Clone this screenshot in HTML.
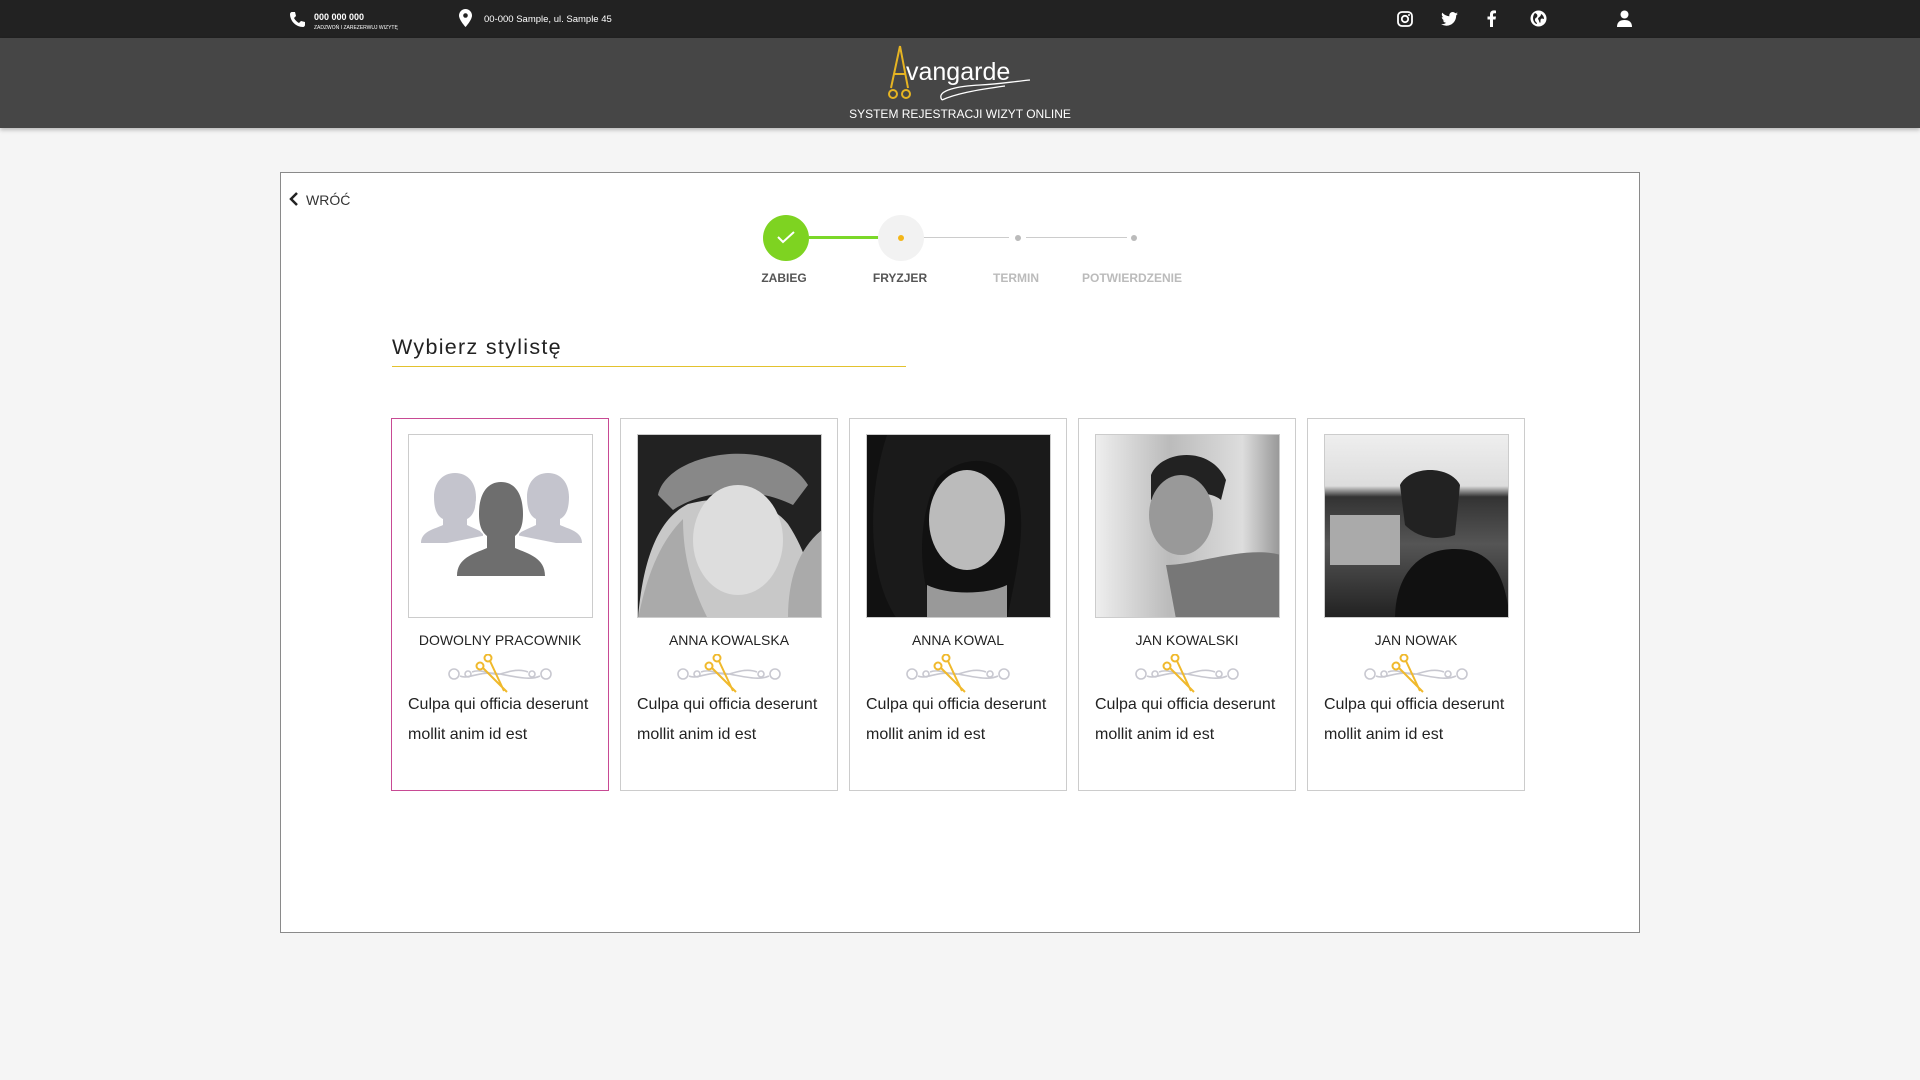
<!DOCTYPE html>
<html><head><meta charset="utf-8"><style>
*{margin:0;padding:0;box-sizing:border-box}
body{width:1920px;height:1080px;background:#f5f5f5;font-family:"Liberation Sans",Arial,sans-serif;position:relative;overflow:hidden}
.top{position:absolute;left:0;top:0;width:1920px;height:38px;background:#222;color:#fff}
.hdr{position:absolute;left:0;top:38px;width:1920px;height:90px;background:#464646;box-shadow:0 2px 4px rgba(0,0,0,.25)}
.abs{position:absolute}
.box{position:absolute;left:280px;top:172px;width:1360px;height:761px;background:#fff;border:1px solid #8a8a8a}
.lbl{position:absolute;top:271px;font-size:12px;font-weight:bold;width:140px;text-align:center;margin-left:-70px}
.card{position:absolute;top:418px;width:218px;height:373px;background:#fff;border:1px solid #ccc}
.card.sel{border-color:#c84a94}
.ph{position:absolute;left:16px;top:15px;width:185px;height:184px;border:1px solid #ccc;overflow:hidden}
.nm{position:absolute;top:213px;left:0;width:216px;text-align:center;font-size:14px;color:#222}
.orn{position:absolute;left:54px;top:235px}
.tx{position:absolute;left:16px;top:271px;font-size:16px;line-height:30px;color:#222;width:200px}
</style></head><body>
<div class="top">
 <svg class="abs" style="left:289px;top:11px" width="16" height="17" viewBox="0 0 16 17"><path d="M3 1l3 0 1 4-2 2c1 2 3 4 5 5l2-2 4 1 0 3c0 1-1 2-2 2C7 16 1 10 1 3c0-1 1-2 2-2z" fill="#fff"/></svg>
 <div class="abs" style="left:314px;top:12px;font-size:9px;font-weight:bold">000 000 000</div>
 <div class="abs" style="left:314px;top:25px;font-size:5px">ZADZWOŃ I ZAREZERWUJ WIZYTĘ</div>
 <svg class="abs" style="left:459px;top:9px" width="13" height="18" viewBox="0 0 13 18"><path d="M6.5 0C3 0 0 3 0 6.5 0 11 6.5 18 6.5 18S13 11 13 6.5C13 3 10 0 6.5 0z" fill="#fff"/><circle cx="6.5" cy="6.5" r="2.3" fill="#222"/></svg>
 <div class="abs" style="left:484px;top:14px;font-size:9.5px">00-000 Sample, ul. Sample 45</div>
 <svg class="abs" style="left:1397px;top:11px" width="16" height="16" viewBox="0 0 16 16"><rect x="1" y="1" width="14" height="14" rx="4" fill="none" stroke="#fff" stroke-width="1.8"/><circle cx="8" cy="8" r="3.2" fill="none" stroke="#fff" stroke-width="1.8"/><circle cx="12" cy="4" r="1" fill="#fff"/></svg>
 <svg class="abs" style="left:1441px;top:12px" width="17" height="14" viewBox="0 0 24 20"><path d="M24 2.4c-.9.4-1.8.7-2.8.8 1-.6 1.8-1.6 2.200-2.7-1 .6-2 1-3.1 1.2C19.3.7 18 0 16.6 0c-2.7 0-4.9 2.2-4.9 4.9 0 .4 0 .8.1 1.1C7.7 5.8 4.1 3.9 1.7.9c-.4.7-.7 1.6-.7 2.5 0 1.7.9 3.2 2.2 4.1-.8 0-1.6-.2-2.2-.6v.1c0 2.4 1.7 4.4 3.9 4.8-.4.1-.8.2-1.3.2-.3 0-.6 0-.9-.1.6 2 2.4 3.4 4.6 3.4-1.7 1.3-3.8 2.1-6.1 2.1H0c2.200 1.4 4.8 2.200 7.5 2.2 9.1 0 14-7.5 14-14v-.6c1-.7 1.8-1.6 2.5-2.6z" fill="#fff"/></svg>
 <svg class="abs" style="left:1487px;top:10px" width="9" height="17" viewBox="0 0 9 17"><path d="M6 17V9.5h2.5L9 6.5H6V4.7c0-.9.3-1.500 1.5-1.5H9V.6C8.7.5 7.8.4 6.8.4 4.6.4 3 1.8 3 4.3v2.2H.5v3H3V17z" fill="#fff"/></svg>
 <svg class="abs" style="left:1530px;top:10px" width="17" height="17" viewBox="0 0 17 17"><circle cx="8.5" cy="8.5" r="8" fill="#fff"/><path d="M5 3c2 1 3 2 2 4-1 1-2 1-2 3s2 2 2 4c-2 0-4-3-4-6 0-2 1-4 2-5zm6 1c2 1 3 3 3 5-1 0-2-1-3 0s0 3-1 4c-1-1-1-3-2-4 0-2 3-2 3-5z" fill="#222"/></svg>
 <svg class="abs" style="left:1616px;top:10px" width="17" height="17" viewBox="0 0 17 17"><circle cx="8.5" cy="4.5" r="4" fill="#fff"/><path d="M1 17c0-5 3-7 7.5-7S16 12 16 17z" fill="#fff"/></svg>
</div>
<div class="hdr">
 <svg class="abs" style="left:885px;top:6px" width="150" height="60" viewBox="0 0 150 60">
  <path d="M15 2 L6 44 M15 2 L23 44 M9 30 L21 30" stroke="#e6b422" stroke-width="2" fill="none"/>
  <circle cx="8" cy="50" r="4" fill="none" stroke="#e6b422" stroke-width="2"/>
  <circle cx="21" cy="50" r="4" fill="none" stroke="#e6b422" stroke-width="2"/>
  <text x="21" y="36" font-family="Liberation Sans, sans-serif" font-size="25" fill="#fff">vangarde</text>
  <path d="M57 56 C50 46 75 42 95 41 S125 38 145 36 M57 56 C70 50 90 46 120 42" stroke="#fff" stroke-width="1.3" fill="none"/>
 </svg>
 <div class="abs" style="left:0;width:1920px;text-align:center;top:69px;font-size:12px;color:#fff">SYSTEM REJESTRACJI WIZYT ONLINE</div>
</div>
<div class="box"></div>
<svg class="abs" style="left:289px;top:192px" width="10" height="14" viewBox="0 0 10 14"><path d="M8 1L2 7l6 6" stroke="#222" stroke-width="2.5" fill="none"/></svg>
<div class="abs" style="left:306px;top:192px;font-size:14px;color:#333">WRÓĆ</div>
<div class="abs" style="left:809px;top:236px;width:70px;height:3px;background:#7bd829"></div>
<div class="abs" style="left:923px;top:237px;width:86px;height:1px;background:#ccc"></div>
<div class="abs" style="left:1026px;top:237px;width:101px;height:1px;background:#ccc"></div>
<div class="abs" style="left:763px;top:215px;width:46px;height:46px;border-radius:50%;background:#7ed321"></div>
<svg class="abs" style="left:776px;top:230px" width="20" height="14" viewBox="0 0 20 14"><path d="M2 7l5 5L18 2" stroke="#fff" stroke-width="2" fill="none"/></svg>
<div class="abs" style="left:878px;top:215px;width:46px;height:46px;border-radius:50%;background:#f2f2f2"></div>
<div class="abs" style="left:898px;top:235px;width:6px;height:6px;border-radius:50%;background:#f3b619"></div>
<div class="abs" style="left:1015px;top:235px;width:6px;height:6px;border-radius:50%;background:#bbb"></div>
<div class="abs" style="left:1131px;top:235px;width:6px;height:6px;border-radius:50%;background:#bbb"></div>
<div class="lbl" style="left:784px;color:#555">ZABIEG</div>
<div class="lbl" style="left:900px;color:#555">FRYZJER</div>
<div class="lbl" style="left:1016px;color:#bbb">TERMIN</div>
<div class="lbl" style="left:1132px;color:#bbb">POTWIERDZENIE</div>
<div class="abs" style="left:392px;top:335px;font-size:21.5px;letter-spacing:1.3px;color:#222">Wybierz stylistę</div>
<div class="abs" style="left:392px;top:366px;width:514px;height:1px;background:#e3c22e"></div>

<div class="card sel" style="left:391px">
 <div class="ph"><svg width="185" height="184" viewBox="0 0 185 184">
  <path d="M12 108c0-12 14-14 22-18v-6c-6-3-9-10-9-22 0-14 8-24 21-24s21 10 21 24c0 12-3 19-9 22v6c6 3 14 6 20 10l-40 8z" fill="#c4c4cd"/>
  <path d="M173 108c0-12-14-14-22-18v-6c6-3 9-10 9-22 0-14-8-24-21-24s-21 10-21 24c0 12 3 19 9 22v6c-6 3-14 6-20 10l40 8z" fill="#c4c4cd"/>
  <path d="M42 141c0-20 18-24 32-30v-12c-5-4-8-10-8-22 0-22 10-34 26-34s26 12 26 34c0 12-3 18-8 22v12c14 6 32 10 32 30z" fill="#fff"/>
  <path d="M48 141c0-18 16-22 30-28v-12c-5-4-8-10-8-22 0-20 8-32 22-32s22 12 22 32c0 12-3 18-8 22v12c14 6 30 10 30 28z" fill="#6e6e6e"/>
 </svg></div>
 <div class="nm">DOWOLNY PRACOWNIK</div>
 <svg class="orn" width="108" height="40" viewBox="0 0 108 40"><g fill="none" stroke="#c8c8d0" stroke-width="1.6"><circle cx="8" cy="20" r="5"/><circle cx="100" cy="20" r="5"/><circle cx="22" cy="20" r="3"/><circle cx="86" cy="20" r="3"/><path d="M14 22c8 4 20-6 40-2s32 6 40 2M26 18c10-4 20 4 28 2s18-6 28-2"/></g><g fill="none" stroke="#f0b92c" stroke-width="2"><circle cx="34" cy="12" r="3.5"/><circle cx="42" cy="4" r="3.5"/><path d="M37 14l24 24M44 7l14 30"/></g></svg>
 <div class="tx">Culpa qui officia deserunt mollit anim id est</div>
</div>
<div class="card" style="left:620px">
 <div class="ph" style="background:#222"><svg width="185" height="184"><path d="M20 60c10-45 120-60 150-10l-15 20c-40-20-90-15-120 5z" fill="#888"/><path d="M0 184c5-60 20-100 50-115 40-10 80-5 100 20 20 30 25 60 35 95z" fill="#c8c8c8"/><ellipse cx="100" cy="105" rx="45" ry="55" fill="#ddd"/><path d="M0 184c10-50 25-80 45-100 0 40 10 70 25 100zM150 184c0-40 10-70 35-90v90z" fill="#aaa"/></svg></div>
 <div class="nm">ANNA KOWALSKA</div>
 <svg class="orn" width="108" height="40" viewBox="0 0 108 40"><g fill="none" stroke="#c8c8d0" stroke-width="1.6"><circle cx="8" cy="20" r="5"/><circle cx="100" cy="20" r="5"/><circle cx="22" cy="20" r="3"/><circle cx="86" cy="20" r="3"/><path d="M14 22c8 4 20-6 40-2s32 6 40 2M26 18c10-4 20 4 28 2s18-6 28-2"/></g><g fill="none" stroke="#f0b92c" stroke-width="2"><circle cx="34" cy="12" r="3.5"/><circle cx="42" cy="4" r="3.5"/><path d="M37 14l24 24M44 7l14 30"/></g></svg>
 <div class="tx">Culpa qui officia deserunt mollit anim id est</div>
</div>
<div class="card" style="left:849px">
 <div class="ph" style="background:#111"><svg width="185" height="184"><path d="M20 0c-20 60-20 140 10 184h40c-20-40-20-100 0-140 30-30 70-20 80 10 10 40 0 80-10 130h45V0z" fill="#1a1a1a"/><ellipse cx="100" cy="85" rx="38" ry="50" fill="#bbb"/><path d="M60 150c20 10 60 10 80 0v34H60z" fill="#999"/></svg></div>
 <div class="nm">ANNA KOWAL</div>
 <svg class="orn" width="108" height="40" viewBox="0 0 108 40"><g fill="none" stroke="#c8c8d0" stroke-width="1.6"><circle cx="8" cy="20" r="5"/><circle cx="100" cy="20" r="5"/><circle cx="22" cy="20" r="3"/><circle cx="86" cy="20" r="3"/><path d="M14 22c8 4 20-6 40-2s32 6 40 2M26 18c10-4 20 4 28 2s18-6 28-2"/></g><g fill="none" stroke="#f0b92c" stroke-width="2"><circle cx="34" cy="12" r="3.5"/><circle cx="42" cy="4" r="3.5"/><path d="M37 14l24 24M44 7l14 30"/></g></svg>
 <div class="tx">Culpa qui officia deserunt mollit anim id est</div>
</div>
<div class="card" style="left:1078px">
 <div class="ph" style="background:linear-gradient(90deg,#eee,#bbb 40%,#ddd 80%,#999)"><svg width="185" height="184"><path d="M55 40c10-25 60-30 75 5l-5 20c-10-10-50-10-70 0z" fill="#222"/><ellipse cx="85" cy="80" rx="32" ry="40" fill="#999"/><path d="M70 130c30 0 80-20 115-10v64H80z" fill="#777"/></svg></div>
 <div class="nm">JAN KOWALSKI</div>
 <svg class="orn" width="108" height="40" viewBox="0 0 108 40"><g fill="none" stroke="#c8c8d0" stroke-width="1.6"><circle cx="8" cy="20" r="5"/><circle cx="100" cy="20" r="5"/><circle cx="22" cy="20" r="3"/><circle cx="86" cy="20" r="3"/><path d="M14 22c8 4 20-6 40-2s32 6 40 2M26 18c10-4 20 4 28 2s18-6 28-2"/></g><g fill="none" stroke="#f0b92c" stroke-width="2"><circle cx="34" cy="12" r="3.5"/><circle cx="42" cy="4" r="3.5"/><path d="M37 14l24 24M44 7l14 30"/></g></svg>
 <div class="tx">Culpa qui officia deserunt mollit anim id est</div>
</div>
<div class="card" style="left:1307px">
 <div class="ph" style="background:linear-gradient(180deg,#eee 0,#ddd 28%,#333 34%,#555 60%,#222 100%)"><svg width="185" height="184"><rect x="5" y="80" width="70" height="50" fill="#aaa"/><path d="M75 50c10-20 50-20 60 0l-5 50c-15 5-35 5-50-10z" fill="#222"/><path d="M70 184c0-40 20-70 60-70s50 30 55 70z" fill="#111"/></svg></div>
 <div class="nm">JAN NOWAK</div>
 <svg class="orn" width="108" height="40" viewBox="0 0 108 40"><g fill="none" stroke="#c8c8d0" stroke-width="1.6"><circle cx="8" cy="20" r="5"/><circle cx="100" cy="20" r="5"/><circle cx="22" cy="20" r="3"/><circle cx="86" cy="20" r="3"/><path d="M14 22c8 4 20-6 40-2s32 6 40 2M26 18c10-4 20 4 28 2s18-6 28-2"/></g><g fill="none" stroke="#f0b92c" stroke-width="2"><circle cx="34" cy="12" r="3.5"/><circle cx="42" cy="4" r="3.5"/><path d="M37 14l24 24M44 7l14 30"/></g></svg>
 <div class="tx">Culpa qui officia deserunt mollit anim id est</div>
</div>
</body></html>
